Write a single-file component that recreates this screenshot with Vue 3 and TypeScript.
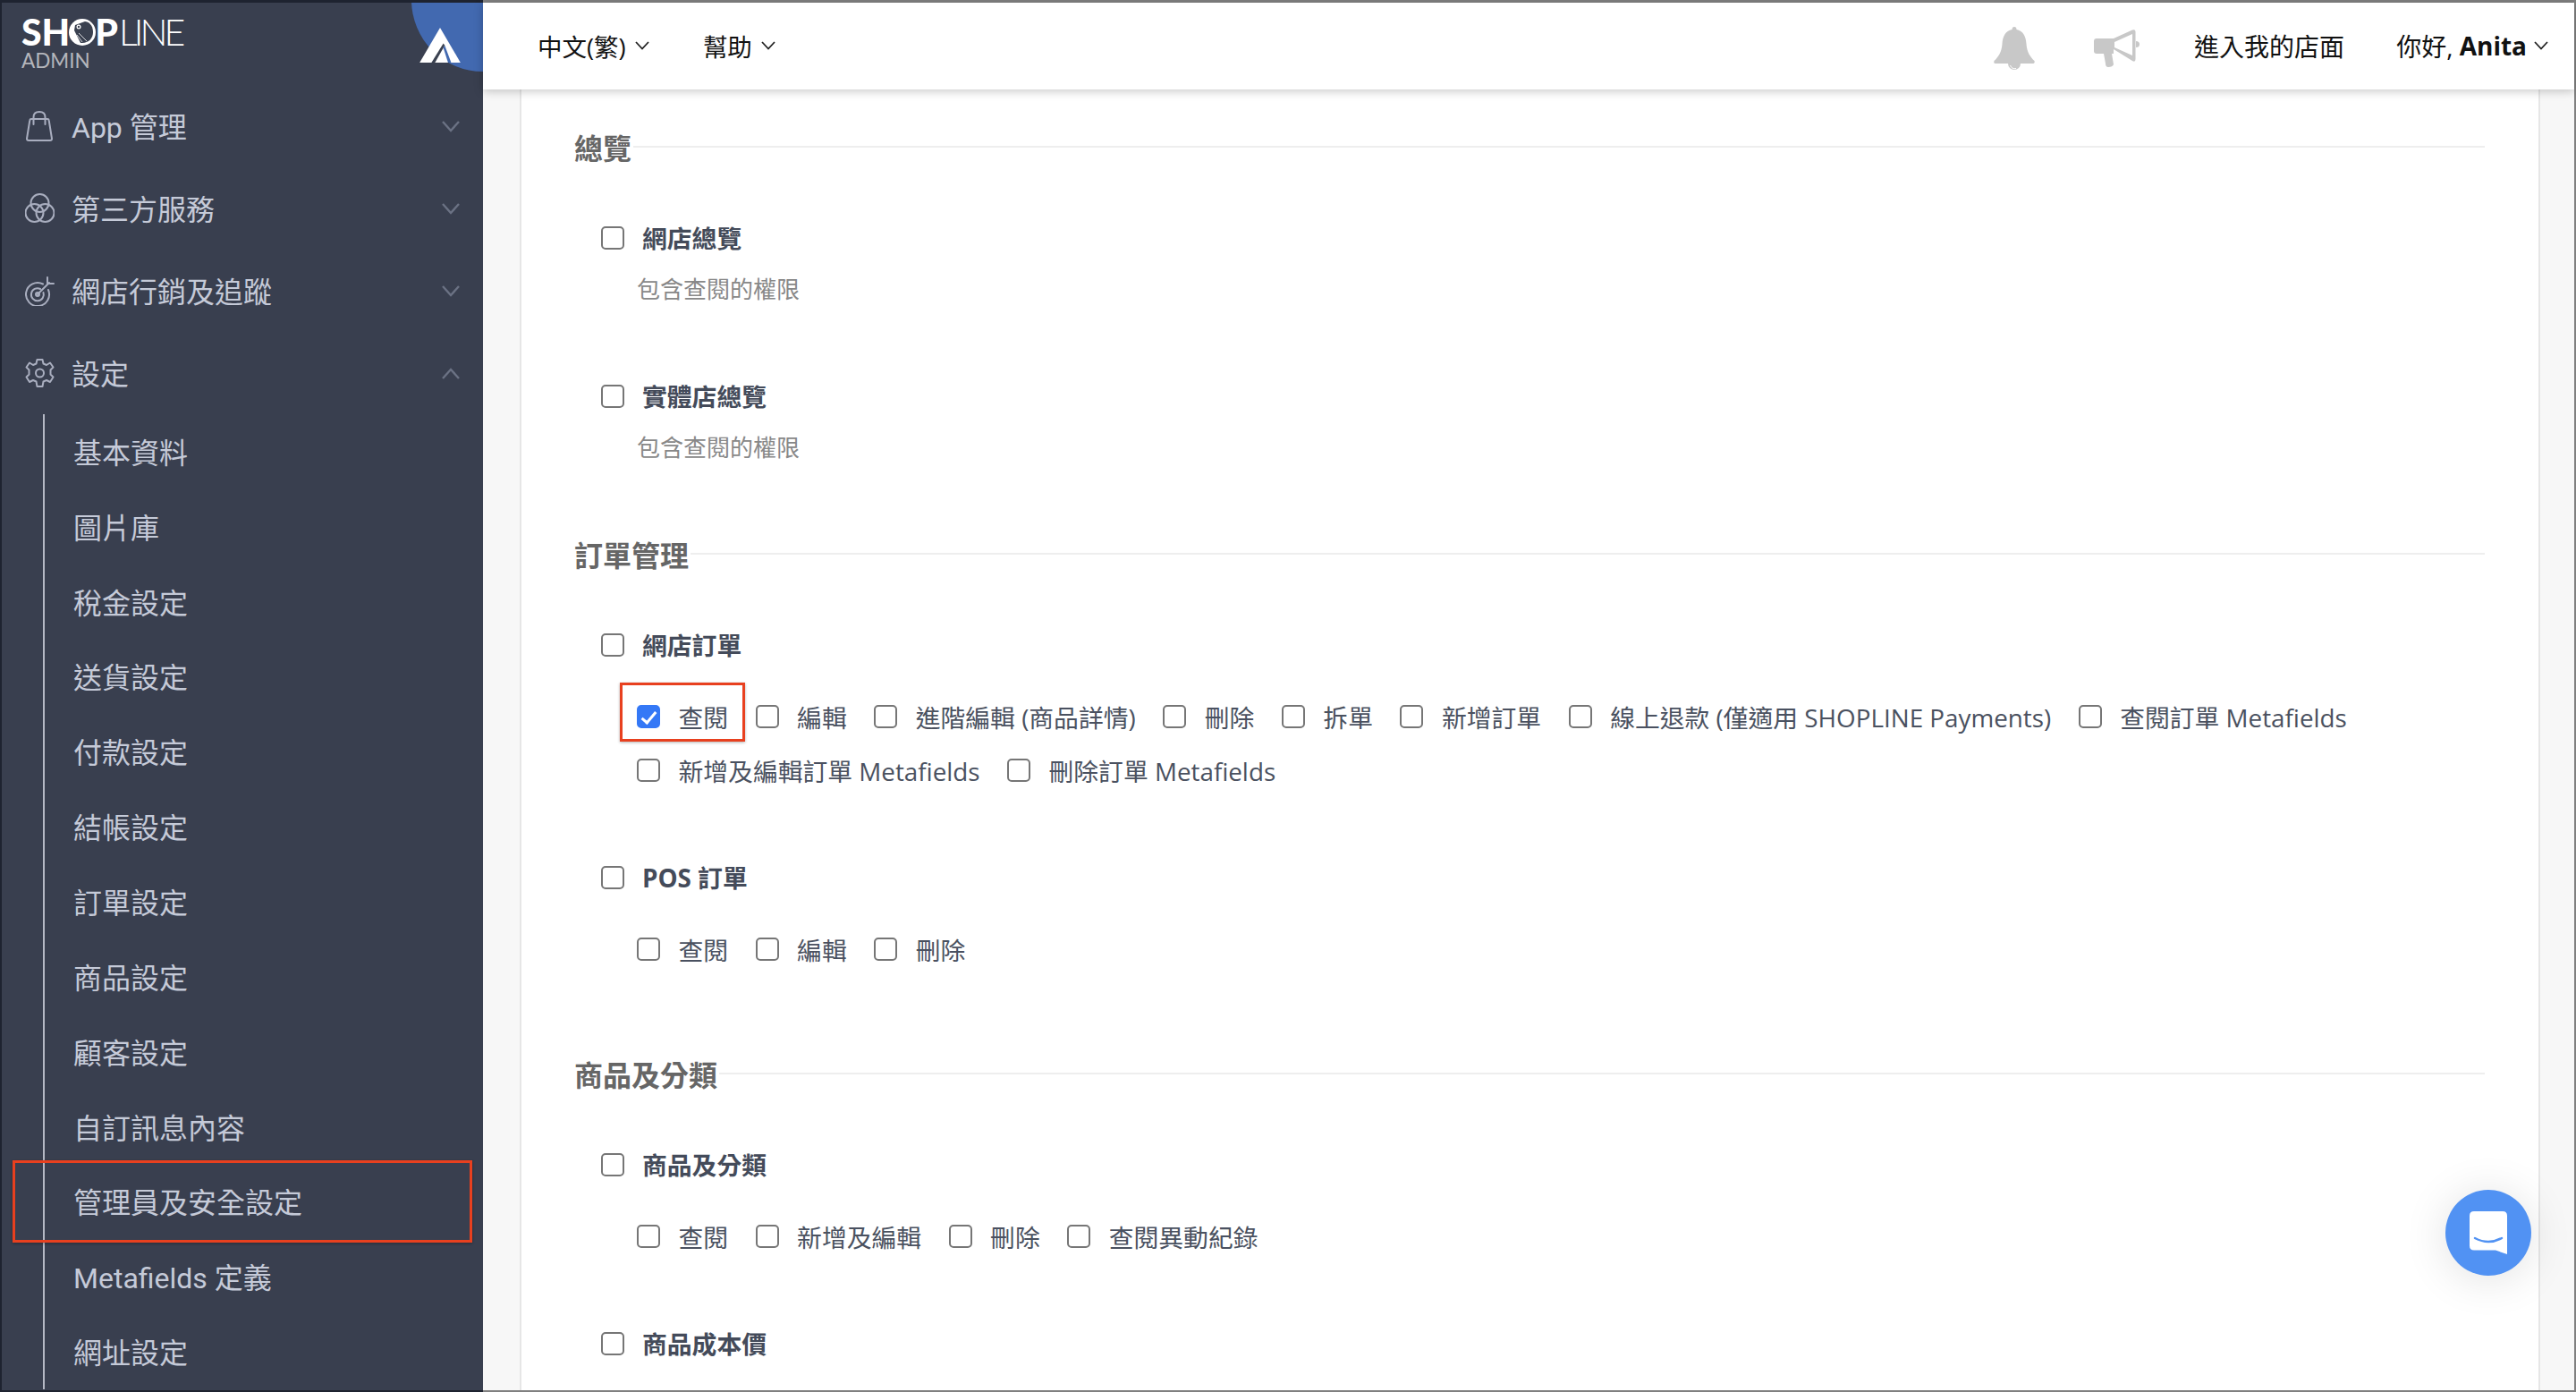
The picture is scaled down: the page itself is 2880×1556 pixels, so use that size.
<script setup lang="ts">
interface Perm { label: string; checked?: boolean; marked?: boolean }
interface Group { title: string; desc?: string; perms?: Perm[] }
interface Section { title: string; cls: string; groups: Group[] }

const menus = ['App 管理', '第三方服務', '網店行銷及追蹤', '設定']
const subMenus = ['基本資料', '圖片庫', '稅金設定', '送貨設定', '付款設定', '結帳設定', '訂單設定', '商品設定', '顧客設定', '自訂訊息內容', '管理員及安全設定', 'Metafields 定義', '網址設定']

const sections: Section[] = [
  {
    title: '總覽',
    cls: 'sec-first',
    groups: [
      { title: '網店總覽', desc: '包含查閱的權限' },
      { title: '實體店總覽', desc: '包含查閱的權限' }
    ]
  },
  {
    title: '訂單管理',
    cls: 'sec-orders',
    groups: [
      {
        title: '網店訂單',
        perms: [
          { label: '查閱', checked: true, marked: true },
          { label: '編輯' },
          { label: '進階編輯 (商品詳情)' },
          { label: '刪除' },
          { label: '拆單' },
          { label: '新增訂單' },
          { label: '線上退款 (僅適用 SHOPLINE Payments)' },
          { label: '查閱訂單 Metafields' },
          { label: '新增及編輯訂單 Metafields' },
          { label: '刪除訂單 Metafields' }
        ]
      },
      { title: 'POS 訂單', perms: [{ label: '查閱' }, { label: '編輯' }, { label: '刪除' }] }
    ]
  },
  {
    title: '商品及分類',
    cls: 'sec-goods',
    groups: [
      {
        title: '商品及分類',
        perms: [{ label: '查閱' }, { label: '新增及編輯' }, { label: '刪除' }, { label: '查閱異動紀錄' }]
      },
      { title: '商品成本價' }
    ]
  }
]
</script>

<template>
  <div class="page">
    <aside class="sidebar">
      <div class="corner"></div>
      <svg class="corner-logo" viewBox="0 0 46 39.300">
        <path d="M23 0 46 39.300H0Z" fill="#fff" />
        <path d="M13.300 39.300 26.700 17.700 28.300 20 17.300 39.300Z" fill="#3a4150" />
        <path d="M26.700 22.700 32 39.300H35.500L28.300 20Z" fill="#4269b0" />
      </svg>
      <div class="brand">
        <div class="brand-name">
          <b>SH</b>
          <svg class="brand-o" viewBox="0 0 30 30">
            <circle cx="15" cy="15" r="15" fill="#fff" />
            <path d="M7 7 18 3C25 4 27 10 27 15 27 22 22 27 15 27H13L6 13Z" fill="#3a4150" />
            <circle cx="11" cy="9" r="2.500" fill="#fff" />
            <circle cx="11" cy="9" r="1.200" fill="#3a4150" />
            <path d="M11 16 20 25M9 18 15 26" stroke="#fff" stroke-width="0.800" fill="none" />
          </svg>
          <b>P</b><span>LINE</span>
        </div>
        <div class="brand-sub">ADMIN</div>
      </div>

      <div v-for="(m, i) in menus" :key="m" class="menu-item">
        <svg class="menu-icon" viewBox="0 0 33 34" fill="none" stroke="#a9aebf" stroke-width="2" stroke-linecap="round" stroke-linejoin="round">
          <template v-if="i === 0">
            <path d="M7 9H25Q26.500 9 26.700 10.500L30 31Q30 33 28 33H4Q2 33 2 31L5.300 10.500Q5.500 9 7 9Z" />
            <path d="M9.500 15V7Q9.500 1 16 1T22.500 7V15" />
          </template>
          <template v-else-if="i === 1">
            <circle cx="16.500" cy="11" r="10" />
            <circle cx="10.500" cy="22" r="10" />
            <circle cx="22.500" cy="22" r="10" />
          </template>
          <template v-else-if="i === 2">
            <path d="M20 9.500A13 13 0 1 0 26 16" />
            <path d="M17 15A7 7 0 1 0 20.500 19" />
            <circle cx="14" cy="21" r="2" />
            <path d="M14 21 27 8M25 2V9H32" />
          </template>
          <template v-else>
            <path d="M13.500 2H19.500L20.500 6.500 24 8 28 5.500 31.500 10.500 28.500 13.500V18.500L31.500 21.500 28 27 24 25 20.500 26.500 19.500 32H13.500L12.500 26.500 9 25 5 27 1.500 21.500 4.500 18.500V13.500L1.500 10.500 5 5.500 9 8 12.500 6.500Z" />
            <circle cx="16.500" cy="17" r="4.500" />
          </template>
        </svg>
        <span class="menu-text">{{ m }}</span>
        <svg class="menu-arrow" viewBox="0 0 20 13" fill="none" stroke="#6b7284" stroke-width="2.400">
          <path v-if="i === 3" d="M1 12 10 2 19 12" />
          <path v-else d="M1 1 10 11 19 1" />
        </svg>
      </div>

      <ul class="sub-menu">
        <li v-for="s in subMenus" :key="s" class="sub-item">
          {{ s }}
          <i v-if="s === '管理員及安全設定'" class="mark-side"></i>
        </li>
      </ul>
    </aside>

    <div class="main">
      <header class="topbar">
        <div class="top-link">中文(繁)
          <svg class="top-arrow" viewBox="0 0 16 10" fill="none" stroke="#222" stroke-width="1.800"><path d="M1 1 8 8.500 15 1" /></svg>
        </div>
        <div class="top-link help">幫助
          <svg class="top-arrow" viewBox="0 0 16 10" fill="none" stroke="#222" stroke-width="1.800"><path d="M1 1 8 8.500 15 1" /></svg>
        </div>
        <div class="spacer"></div>
        <svg class="bell" viewBox="0 0 46 48" fill="#c8c8c8">
          <path d="M23 0Q25.500 0 25.500 3C33 4.500 36 11 36.500 19 37 28 41 34 45.500 38 46.500 41 44 41 44 41H2Q-.5 41 .5 38C5 34 9 28 9.500 19 10 11 13 4.500 20.500 3Q20.500 0 23 0Z" />
          <path d="M16 41A7 7 0 0 0 30 41Z" />
          <path d="M18.500 43A5 5 0 0 0 25 46.500" fill="none" stroke="#fff" stroke-width="1" />
        </svg>
        <svg class="horn" viewBox="0 0 51 42" fill="#c8c8c8">
          <path d="M3 10H22V27H3Q0 27 0 24V13Q0 10 3 10Z" />
          <path d="M11 27H20L22 39Q21 42 16 42 13 42 13 38Z" />
          <path fill-rule="evenodd" d="M22 10 43 0.500Q46.500 -.5 46.500 2.500V33Q46.500 37 43 35L22 22ZM23 14V20L43 29V5Z" />
          <path d="M47 13Q51 13 51 16.500T47 20Z" />
        </svg>
        <div class="top-text">進入我的店面</div>
        <div class="top-text hello">你好, <b>Anita</b>
          <svg class="top-arrow" viewBox="0 0 16 10" fill="none" stroke="#222" stroke-width="1.800"><path d="M1 1 8 8.500 15 1" /></svg>
        </div>
      </header>

      <div class="body">
        <div class="card">
          <section v-for="sec in sections" :key="sec.title" :class="['section', sec.cls]">
            <div class="sec-head">
              <h3>{{ sec.title }}</h3>
              <div class="sec-line"></div>
            </div>
            <div v-for="g in sec.groups" :key="g.title" class="group">
              <label class="group-row">
                <input type="checkbox" class="check" />
                <span>{{ g.title }}</span>
              </label>
              <div v-if="g.desc" class="desc">{{ g.desc }}</div>
              <div v-if="g.perms" class="perms">
                <label v-for="p in g.perms" :key="p.label" class="perm">
                  <input type="checkbox" class="check" :checked="p.checked" />
                  <span>{{ p.label }}</span>
                  <i v-if="p.marked" class="mark-perm"></i>
                </label>
              </div>
            </div>
          </section>
        </div>
      </div>

      <button class="chat" type="button" aria-label="chat">
        <svg viewBox="0 0 42 48" width="42" height="48">
          <path d="M5 0H37Q42 0 42 5V48L29 43.500H5Q0 43.500 0 38.500V5Q0 0 5 0Z" fill="#fff" />
          <path d="M6 30Q21 38 36 30" fill="none" stroke="#5192f3" stroke-width="2.500" stroke-linecap="round" />
        </svg>
      </button>
    </div>
  </div>
</template>

<style>
html, body {
  margin: 0;
  background: #fff;
}
</style>

<style scoped>
.page {
  position: relative;
  display: flex;
  width: 2880px;
  height: 1556px;
  overflow: hidden;
  font-family: "Open Sans", "Noto Sans CJK TC", sans-serif;
}
.sidebar {
  position: relative;
  box-sizing: border-box;
  flex: 0 0 540px;
  height: 1556px;
  overflow: hidden;
  background: #393f4f;
  border-top: 3px solid #1e2330;
  border-bottom: 2px solid #1e2330;
  border-left: 2px solid #1e2330;
  font-family: Roboto, "Noto Sans CJK TC", sans-serif;
}
.corner {
  position: absolute;
  top: -83px;
  right: -80px;
  width: 160px;
  height: 160px;
  border-radius: 50%;
  background: #4269b0;
}
.corner-logo {
  position: absolute;
  top: 28px;
  left: 467px;
  width: 46px;
  height: 39px;
}
.brand {
  height: 92px;
  padding: 17px 0 0 22px;
  box-sizing: border-box;
  font-family: Lato, sans-serif;
}
.brand-name {
  display: flex;
  align-items: center;
  height: 32px;
  font-size: 41px;
  line-height: 32px;
  color: #fff;
}
.brand-name b {
  font-weight: 900;
}
.brand-name span {
  font-weight: 300;
  margin-left: 1px;
  letter-spacing: -4px;
}
.brand-o {
  width: 30px;
  height: 30px;
  margin: 0 -1px;
}
.brand-sub {
  margin-top: 7px;
  font-size: 22.500px;
  line-height: 18px;
  color: #b4b6bc;
}
.menu-item {
  display: flex;
  align-items: center;
  box-sizing: border-box;
  height: 92px;
  padding: 0 26px 2px 26px;
}
.menu-icon {
  flex: none;
  width: 33px;
  height: 34px;
  margin-top: 2px;
}
.menu-text {
  margin-left: 19px;
  font-size: 32px;
  color: #c5cad8;
}
.menu-arrow {
  width: 20px;
  height: 13px;
  margin: 2px 0 0 auto;
}
.sub-menu {
  list-style: none;
  margin: 18px 0 0 46px;
  padding: 0 0 0 32px;
  border-left: 2px solid #b5b9c5;
}
.sub-item {
  position: relative;
  display: flex;
  align-items: center;
  box-sizing: border-box;
  height: 83.850px;
  padding-bottom: 2px;
  font-size: 32px;
  color: #c5cad8;
}
.sub-item:first-child {
  margin-top: -18px;
}
.sub-item:last-child {
  margin-bottom: -17px;
}
.mark-side {
  position: absolute;
  top: 0;
  left: -68px;
  width: 514px;
  height: 92px;
  box-sizing: border-box;
  margin-top: -4px;
  border: 3px solid #e8401f;
  box-shadow: 0 1px 3px rgba(0, 0, 0, 0.3);
}
.main {
  position: relative;
  display: flex;
  flex-direction: column;
  flex: 1;
  min-width: 0;
  box-sizing: border-box;
  height: 1556px;
  border-top: 3px solid #808080;
  border-right: 2px solid #808080;
  border-bottom: 2px solid #808080;
}
.topbar {
  position: relative;
  z-index: 2;
  display: flex;
  flex: none;
  align-items: center;
  box-sizing: border-box;
  height: 97px;
  padding: 0 29px 2px 61px;
  background: #fff;
  box-shadow: 0 2px 10px rgba(0, 0, 0, 0.22);
  font-size: 28px;
  color: #111;
}
.top-link, .top-text {
  display: flex;
  align-items: center;
  white-space: pre;
}
.top-link {
  font-size: 27.500px;
}
.help {
  margin-left: 60px;
}
.top-arrow {
  width: 16px;
  height: 10px;
  margin-left: 3px;
}
.hello .top-arrow {
  margin-left: 8px;
}
.spacer {
  flex: 1;
}
.bell {
  width: 46px;
  height: 48px;
  margin-top: 7px;
}
.horn {
  width: 51px;
  height: 42px;
  margin: 7px 0 0 66px;
}
.top-text {
  margin-left: 61px;
}
.hello {
  margin-left: 58px;
}
.body {
  flex: 1;
  min-height: 0;
  padding: 0 38px 0 41px;
  background: #f7f7f7;
  overflow: hidden;
}
.card {
  box-sizing: border-box;
  height: 100%;
  padding: 44px 60px 0 60px;
  background: #fff;
  border-left: 2px solid #e6e6e6;
  border-right: 2px solid #e6e6e6;
}
.section + .section {
  margin-top: 81px;
}
.sec-goods.section {
  margin-top: 99px;
}
.sec-head {
  display: flex;
  align-items: center;
  height: 40px;
}
.sec-head h3 {
  margin: 0 0 0 -1px;
  font-size: 32px;
  font-weight: 700;
  color: #666;
}
.sec-line {
  flex: 1;
  height: 2px;
  margin: 0 0 0 2px;
  background: #eee;
}
.group {
  margin-top: 80px;
}
.sec-first .group + .group {
  margin-top: 82px;
}
.sec-head + .group {
  margin-top: 62px;
}
.group-row {
  display: flex;
  align-items: center;
  height: 40px;
  padding-left: 29px;
  font-size: 27.800px;
  font-weight: 700;
  color: #444b5a;
}
.group-row span {
  margin: -2px 0 0 20px;
}
.check {
  flex: none;
  appearance: none;
  position: relative;
  box-sizing: border-box;
  width: 26px;
  height: 26px;
  margin: 0;
  border: 2px solid #767676;
  border-radius: 5px;
  background: #fff;
}
.check:checked {
  border-color: #3478f6;
  background: #3478f6;
}
.check:checked::after {
  content: "";
  position: absolute;
  top: 2px;
  left: 7px;
  width: 6px;
  height: 14px;
  border: solid #fff;
  border-width: 0 3px 3px 0;
  transform: rotate(40deg);
}
.desc {
  margin: 19px 0 0 69px;
  height: 36px;
  line-height: 36px;
  font-size: 26px;
  color: #888;
}
.perms {
  display: flex;
  flex-wrap: wrap;
  gap: 20px 30.500px;
  margin: 40px 0 0 69px;
}
.perm {
  position: relative;
  display: flex;
  align-items: center;
  height: 40px;
  font-size: 27.800px;
  color: #4a5160;
  white-space: pre;
}
.perm span {
  margin-left: 20.500px;
}
.mark-perm {
  position: absolute;
  top: -18px;
  left: -19px;
  width: 140px;
  height: 66px;
  box-sizing: border-box;
  border: 3px solid #e8401f;
  box-shadow: 0 1px 3px rgba(0, 0, 0, 0.3);
}
.chat {
  position: absolute;
  top: 1327px;
  right: 48px;
  z-index: 3;
  display: flex;
  align-items: center;
  justify-content: center;
  width: 96px;
  height: 96px;
  padding: 0;
  border: none;
  border-radius: 50%;
  background: #5192f3;
  box-shadow: 0 4px 50px rgba(0, 0, 0, 0.12);
}
</style>
